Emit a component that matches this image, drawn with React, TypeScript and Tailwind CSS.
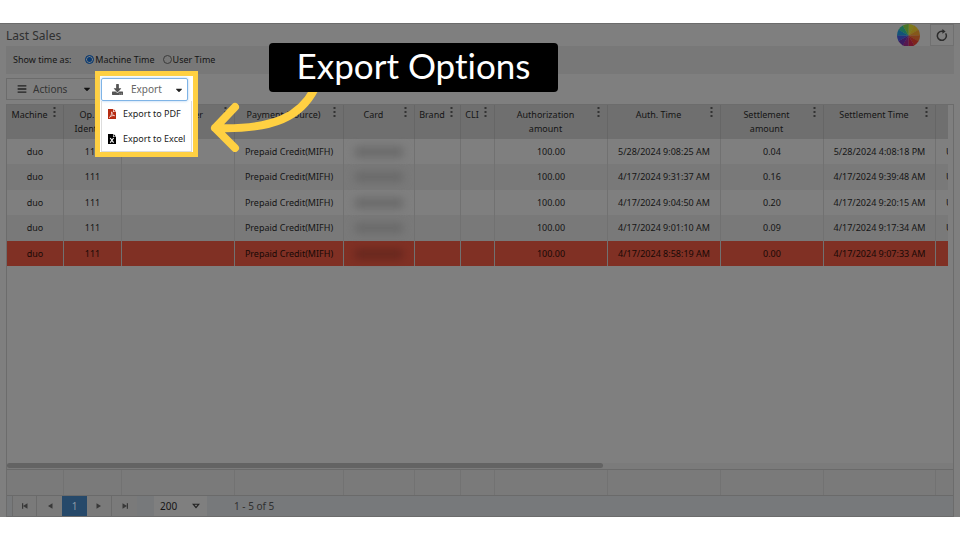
import { useState } from "react";
import clsx from "clsx";
import { FaBars, FaCaretDown, FaDownload } from "react-icons/fa";

interface Sale {
  authTime: string;
  amount: string;
  settlementTime: string;
  failed?: boolean;
}

const SALES: Sale[] = [
  { authTime: "5/28/2024 9:08:25 AM", amount: "0.04", settlementTime: "5/28/2024 4:08:18 PM" },
  { authTime: "4/17/2024 9:31:37 AM", amount: "0.16", settlementTime: "4/17/2024 9:39:48 AM" },
  { authTime: "4/17/2024 9:04:50 AM", amount: "0.20", settlementTime: "4/17/2024 9:20:15 AM" },
  { authTime: "4/17/2024 9:01:10 AM", amount: "0.09", settlementTime: "4/17/2024 9:17:34 AM" },
  { authTime: "4/17/2024 8:58:19 AM", amount: "0.00", settlementTime: "4/17/2024 9:07:33 AM", failed: true },
];

const COLUMNS = [
  { title: "Machine", width: "w-[57px]" },
  { title: "Op.\nIdent.", width: "w-[58px]" },
  { title: "Serial Number", width: "w-[113px]" },
  { title: "Payment (Source)", width: "w-[109px]" },
  { title: "Card", width: "w-[71px]" },
  { title: "Brand", width: "w-[46px]" },
  { title: "CLI", width: "w-[34px]" },
  { title: "Authorization\namount", width: "w-[113px]" },
  { title: "Auth. Time", width: "w-[113px]" },
  { title: "Settlement\namount", width: "w-[103px]" },
  { title: "Settlement Time", width: "w-[112px]" },
];

const WHEEL = [
  "#7d7a1c", "#85701a", "#85581a", "#823f1a", "#7f241b", "#74162b",
  "#57184f", "#3b1c60", "#27307a", "#125479", "#1c6c55", "#4a7527",
];

function ColorWheel() {
  return (
    <svg viewBox="-12 -12 24 24" className="size-[23px]" aria-hidden="true">
      {WHEEL.map((color, i) => {
        const a = ((i * 30 - 90) * Math.PI) / 180;
        const b = ((i * 30 - 59) * Math.PI) / 180;
        return (
          <path
            key={color + i}
            fill={color}
            d={`M0 0L${12 * Math.cos(a)} ${12 * Math.sin(a)}A12 12 0 0 1 ${12 * Math.cos(b)} ${12 * Math.sin(b)}Z`}
          />
        );
      })}
    </svg>
  );
}

function ReloadIcon() {
  return (
    <svg viewBox="0 0 12 12" className="size-3" fill="none" aria-hidden="true">
      <path d="M9.6 4.3A4.5 4.5 0 1 1 6 2.3H7" stroke="#2c2c2c" strokeWidth="1.5" />
      <path d="M6.4 0L9.6 2.4L6.4 4.8Z" fill="#2c2c2c" />
    </svg>
  );
}

function PdfIcon() {
  return (
    <svg viewBox="0 0 8 10" className="h-2.5 w-2 shrink-0" fill="none" aria-hidden="true">
      <path d="M0 0H5V3H8V10H0Z" fill="#b52b12" />
      <path d="M5.6 0L8 2.4H5.6Z" fill="#b52b12" />
      <path d="M1.4 8.4C2.8 7.4 3.8 5.4 3.7 2.8C4 5 5 6.4 6.6 6.7C4.8 6.3 3.2 6.7 1.4 8.4Z" stroke="#fff" strokeWidth="0.7" />
    </svg>
  );
}

function ExcelIcon() {
  return (
    <svg viewBox="0 0 8 10" className="h-2.5 w-2 shrink-0" fill="none" aria-hidden="true">
      <path d="M0 0H5V3H8V10H0Z" fill="#000" />
      <path d="M5.6 0L8 2.4H5.6Z" fill="#000" />
      <path d="M2.2 4L5.6 8.6M5.6 4L2.2 8.6" stroke="#fff" strokeWidth="1.1" />
    </svg>
  );
}

function Dots() {
  return (
    <svg viewBox="0 0 3 10" className="absolute top-0.5 right-[7px] h-2.5 w-[3px]" fill="#333" aria-hidden="true">
      <rect x="0.5" y="0" width="2" height="2" />
      <rect x="0.5" y="4" width="2" height="2" />
      <rect x="0.5" y="8" width="2" height="2" />
    </svg>
  );
}

function PagerIcon({ flip, bar }: { flip?: boolean; bar?: boolean }) {
  return (
    <svg viewBox="0 0 8 8" className={clsx("size-2", flip && "rotate-180")} fill="#383838" aria-hidden="true">
      <path d="M6.5 1.2V6.8L2 4Z" />
      {bar && <rect x="1" y="1.2" width="1.2" height="5.6" />}
    </svg>
  );
}

function ExportMenu() {
  return (
    <div className="absolute -top-[3px] left-[89px] z-10 h-[86px] w-[103px] border-5 border-[#ffd042] bg-white pt-0.5 pl-px">
      <button className="flex h-[23px] w-[87px] items-center rounded-xs border border-[#7fb4e6] pr-[3px] pl-2.5 text-[10px] text-[#666] shadow-[0_0_3px_#a9cdf0]">
        <FaDownload className="mr-2 size-[11px] text-[#555]" />
        Export
        <FaCaretDown className="ml-auto size-2.5 text-[#222]" />
      </button>
      <ul className="w-[91px] border border-t-0 border-[#ddd] text-[9px] text-[#222]">
        <li>
          <button className="flex h-[26px] w-full items-center gap-[7px] pl-1.5 whitespace-nowrap">
            <PdfIcon />
            Export to PDF
          </button>
        </li>
        <li>
          <button className="flex h-6 w-full items-center gap-[7px] pl-1.5 whitespace-nowrap">
            <ExcelIcon />
            Export to Excel
          </button>
        </li>
      </ul>
    </div>
  );
}

function Callout() {
  return (
    <>
      <svg viewBox="0 0 110 64" className="absolute top-[88px] left-[208px] z-10 h-16 w-[110px]" fill="none" aria-hidden="true">
        <path
          d="M107 0C93 28 67 42 7 40M27 19L7 40L27 60"
          stroke="#ffd042"
          strokeWidth="8"
          strokeLinecap="round"
          strokeLinejoin="round"
        />
      </svg>
      <div className="absolute top-[43px] left-[269px] z-20 flex h-[49px] w-[289px] items-center justify-center rounded-sm bg-black pb-1 font-[Lato,sans-serif] text-[35px] text-white [font-variant-ligatures:none]">
        Export Options
      </div>
    </>
  );
}

export default function App() {
  const [mode, setMode] = useState("machine");

  return (
    <div className="relative h-screen overflow-hidden bg-white py-[23px] font-['Noto_Sans',sans-serif] text-[9px] text-[#151515]">
      <main className="flex h-full flex-col border-t border-[#6c6c6c] bg-[#7f7f7f] px-1.5">
        <header className="flex h-[22px] items-center">
          <h1 className="pt-0.5 text-[12px] text-[#303030]">Last Sales</h1>
          <div className="ml-auto mr-2.5">
            <ColorWheel />
          </div>
          <button aria-label="Reload" className="flex h-[22px] w-6 items-center justify-center border border-[#707070]">
            <ReloadIcon />
          </button>
        </header>

        <div className="flex h-7 shrink-0 items-center bg-[#787878] px-[7px]">
          <span className="mr-3.5">Show time as:</span>
          {[
            ["machine", "Machine Time"],
            ["user", "User Time"],
          ].map(([value, label]) => (
            <label key={value} className="mr-2 flex items-center gap-px">
              <input
                type="radio"
                name="mode"
                value={value}
                checked={mode === value}
                onChange={() => setMode(value)}
                className="mb-0.5 size-[9px] appearance-none rounded-full border border-[#3b3b3b] checked:border-[#0a3b73] checked:bg-[#0a3b73] checked:shadow-[inset_0_0_0_1px_#808080]"
              />
              {label}
            </label>
          ))}
        </div>

        <div className="relative flex h-[30px] shrink-0 items-center">
          <button className="flex h-[22px] w-[91px] items-center border border-[#6c6c6c] pr-1 pl-2.5 text-[10px] text-[#333]">
            <FaBars className="mr-1.5 size-2.5 text-[#222]" />
            Actions
            <FaCaretDown className="ml-auto size-2.5 text-[#111]" />
          </button>
          <ExportMenu />
        </div>

        {/* Grid */}
        <section className="flex min-h-0 flex-1 flex-col border border-[#6c6c6c]">
          <div className="min-h-0 flex-1 overflow-hidden pr-[5px]">
            <table className="w-full table-fixed border-separate border-spacing-0 text-center">
              <colgroup>
                {COLUMNS.map((c) => (
                  <col key={c.title} className={c.width} />
                ))}
                <col />
              </colgroup>
              <thead>
                <tr className="h-[34px] bg-[#6f6f6f]">
                  {COLUMNS.map((c) => (
                    <th
                      key={c.title}
                      className="relative border-r border-[#666] pt-[3px] pr-[11px] align-top leading-[14px] font-normal whitespace-pre"
                    >
                      {c.title}
                      <Dots />
                    </th>
                  ))}
                  <th />
                </tr>
              </thead>
              <tbody>
                {SALES.map((s) => (
                  <tr
                    key={s.authTime}
                    className={clsx(
                      "h-[25px] whitespace-nowrap even:h-[26px] *:border-r *:border-[#717171] *:last:border-r-0",
                      s.failed ? "bg-[#803024] text-[#180906]" : "even:bg-[#797979]"
                    )}
                  >
                    <td>duo</td>
                    <td>111</td>
                    <td />
                    <td>Prepaid Credit(MIFH)</td>
                    <td>
                      <div className={clsx("mx-auto h-2.5 w-12 blur-[4px]", s.failed ? "bg-[#66271e]" : "bg-[#696969]")} />
                    </td>
                    <td />
                    <td />
                    <td>100.00</td>
                    <td>{s.authTime}</td>
                    <td>{s.amount}</td>
                    <td>{s.settlementTime}</td>
                    <td className="overflow-hidden pl-2.5 text-left">{!s.failed && "U"}</td>
                  </tr>
                ))}
              </tbody>
            </table>
          </div>
          <div className="h-1.5 bg-[#7b7b7b]">
            <div className="h-[5px] w-[63%] rounded-sm bg-[#636363]" />
          </div>
          <div className="flex h-[27px] border-y border-[#6a6a6a] bg-[#7a7a7a]">
            {COLUMNS.map((c) => (
              <div key={c.title} className={clsx("shrink-0 border-r border-[#727272]", c.width)} />
            ))}
          </div>
          <nav className="flex h-5 items-center bg-[#77797b] pl-[5px]">
            <button aria-label="First page" className="flex h-full w-[25px] items-center justify-center border-x border-[#6b6b6b] bg-[#7a7a7a]">
              <PagerIcon bar />
            </button>
            <button aria-label="Previous page" className="flex h-full w-[25px] items-center justify-center bg-[#7a7a7a]">
              <PagerIcon />
            </button>
            <button className="h-full w-[25px] bg-[#26496a] text-[10px] text-[#8c9aa8]">1</button>
            <button aria-label="Next page" className="flex h-full w-[25px] items-center justify-center border-r border-[#6b6b6b] bg-[#7a7a7a]">
              <PagerIcon flip />
            </button>
            <button aria-label="Last page" className="flex h-full w-[25px] items-center justify-center bg-[#7a7a7a]">
              <PagerIcon flip bar />
            </button>
            <div className="relative ml-[17px] h-full w-[53px] bg-[#7f7f7f]">
              <select aria-label="Rows per page" defaultValue="200" className="h-full w-full appearance-none pl-1.5 text-[10px]">
                <option>50</option>
                <option>100</option>
                <option>200</option>
              </select>
              <svg viewBox="0 0 8 6" className="pointer-events-none absolute top-[7px] right-[7px] h-1.5 w-2" fill="none" aria-hidden="true">
                <path d="M1.2 1.2H6.8L4 4.6Z" stroke="#222" strokeWidth="1.1" />
              </svg>
            </div>
            <span className="ml-[27px] text-[10px] text-[#303030]">1 - 5 of 5</span>
          </nav>
        </section>
      </main>
      <Callout />
    </div>
  );
}
